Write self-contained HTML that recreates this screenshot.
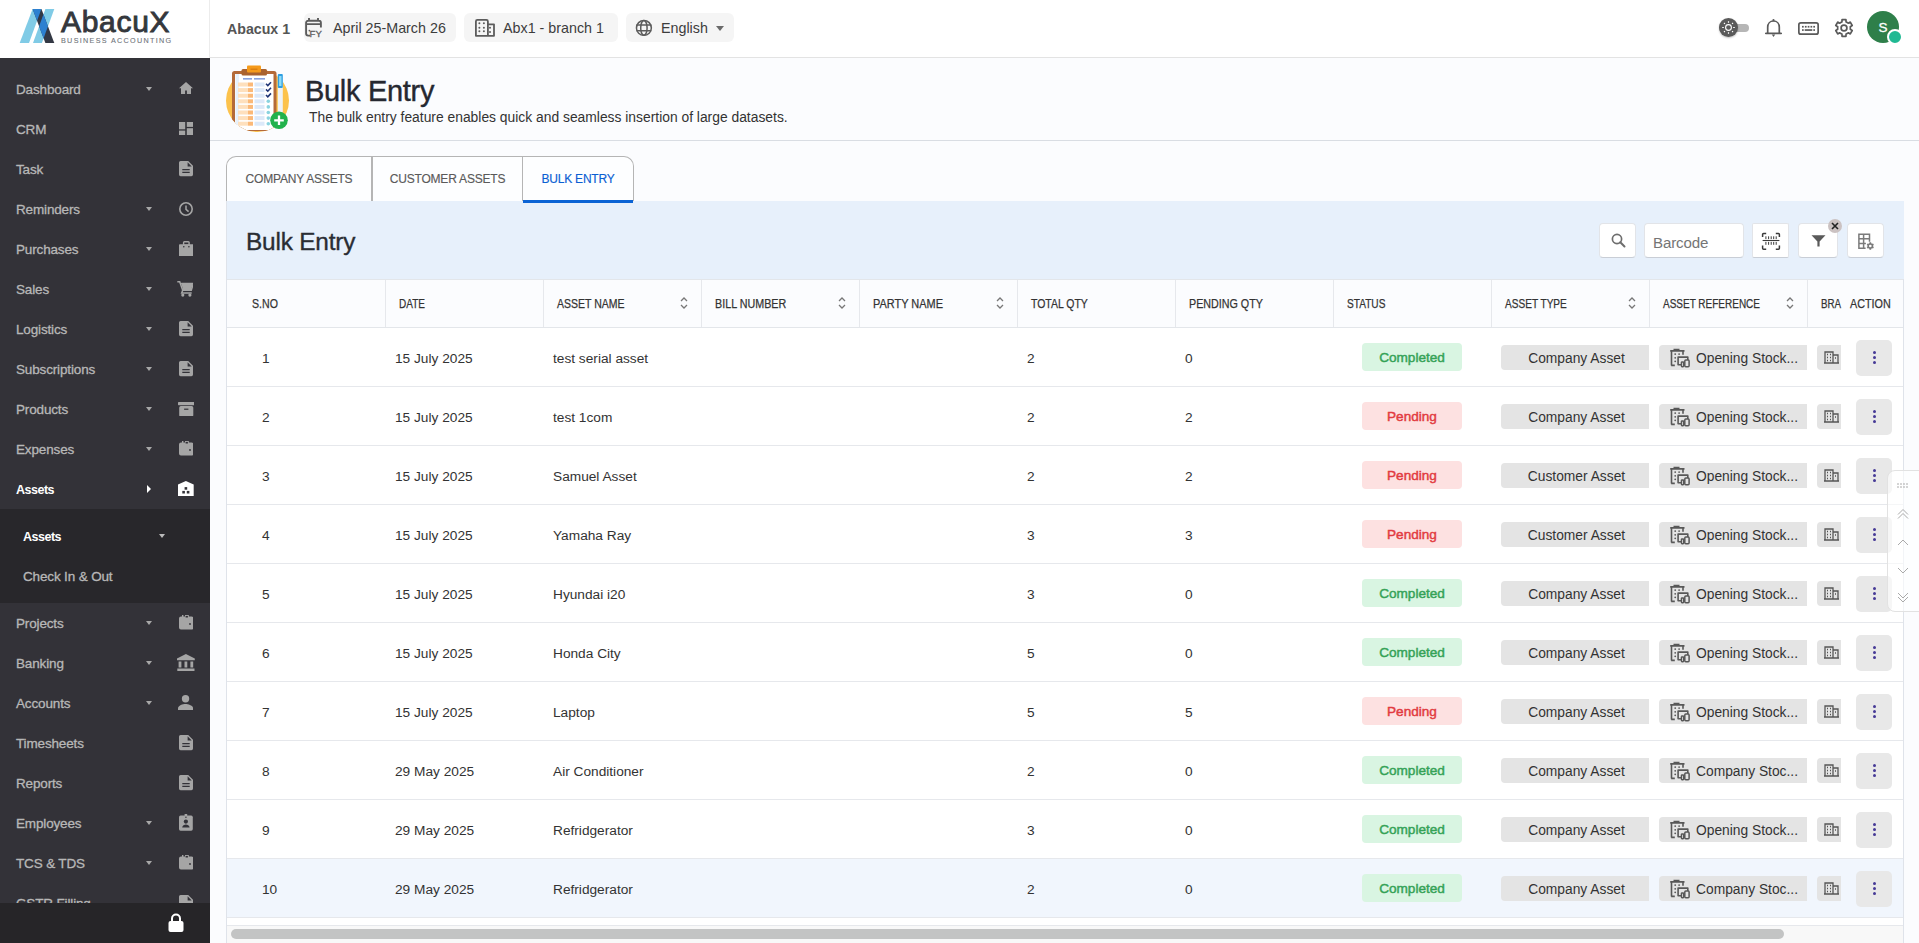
<!DOCTYPE html><html><head><meta charset="utf-8"><style>
*{box-sizing:border-box;margin:0;padding:0}
html,body{width:1919px;height:943px;overflow:hidden;background:#fbfcfe;font-family:"Liberation Sans",sans-serif;color:#333}
.abs{position:absolute}
#side{position:absolute;left:0;top:0;width:210px;height:943px;background:#333238;overflow:hidden}
#logo{position:absolute;left:0;top:0;width:210px;height:58px;background:#fff;border-right:1px solid #ececec}
.mi{position:absolute;left:0;width:210px;height:40px;color:#b9b9b9;font-size:13.5px;line-height:41.5px;letter-spacing:-0.15px;-webkit-text-stroke:0.3px #b6b6b6}
.mi .t{position:absolute;left:16px;top:0;white-space:nowrap}
.mi.act{color:#fff;font-weight:bold;-webkit-text-stroke:0;letter-spacing:-0.5px;font-size:12.5px;line-height:43px}
.car{position:absolute;left:146px;top:18px;width:0;height:0;border-left:3.5px solid transparent;border-right:3.5px solid transparent;border-top:4px solid #a8a8a8}
.carr{position:absolute;left:147px;top:16px;width:0;height:0;border-top:4px solid transparent;border-bottom:4px solid transparent;border-left:4px solid #fff}


#sub{position:absolute;left:0;top:509px;width:210px;height:94px;background:#28272b}
#lock{position:absolute;left:0;top:903px;width:210px;height:40px;background:#262528}
#hdr{position:absolute;left:210px;top:0;width:1709px;height:58px;background:#fff;border-bottom:1px solid #e3e3e3}
.pill{position:absolute;top:13px;height:29px;background:#f5f5f5;border-radius:6px;color:#3d3d3d;font-size:14.3px;line-height:31px;white-space:nowrap}
#ph{position:absolute;left:210px;top:58px;width:1709px;height:83px;border-bottom:1px solid #d9dde3}
.tab{position:absolute;top:156px;height:45px;border:1px solid #b5b5b5;border-bottom:none;background:#fdfeff;color:#5a5a5a;font-size:12px;line-height:45px;text-align:center;white-space:nowrap;letter-spacing:-0.2px;-webkit-text-stroke:0.15px #5a5a5a}
#card{position:absolute;left:226px;top:201px;width:1678px;height:742px;background:#fff;border-left:1px solid #dfe3ea;border-right:1px solid #dfe3ea}
#ch{position:absolute;left:0;top:0;width:1677px;height:78px;background:#e7f0fb}
.btn{position:absolute;top:22px;height:35px;background:#fff;border-radius:4px;border:1px solid #e2e4e8;border-bottom-color:#c9ced6}
.th{position:absolute;top:78px;height:49px;background:#fbfcfe;border-top:1px solid #e3e6ea;border-bottom:1px solid #e3e6ea}
.thc{position:absolute;top:0;height:47px;border-right:1px solid #e6e8ec;font-size:12.5px;-webkit-text-stroke:0.25px #333;color:#333;line-height:48px;white-space:nowrap}
.srt{position:absolute;top:16px;width:8px;height:14px}
.row{position:absolute;left:0;width:1676px;height:59px;border-bottom:1px solid #e6e8ec;font-size:13.7px;color:#333}
.row .c{position:absolute;top:1.5px;line-height:58px;white-space:nowrap}
.badge{position:absolute;left:1135px;top:15px;width:100px;height:28px;border-radius:4px;font-size:13.6px;text-align:center;line-height:29px}
.ok{background:#d9f5e2;color:#35a257;-webkit-text-stroke:0.45px #35a257}
.pen{background:#fde1e1;color:#e23a3f;-webkit-text-stroke:0.45px #e23a3f}
.chip{position:absolute;top:17px;height:25px;background:#e4e4e4;font-size:13.8px;line-height:27px;white-space:nowrap;color:#333}
.act3{position:absolute;left:1629px;top:12px;width:36px;height:36px;background:#e8e8e8;border-radius:5px}
.act3 i{position:absolute;left:16.8px;width:3.2px;height:3.2px;border-radius:50%;background:#463a96}
</style></head><body>
<div id="side"><div id="logo">
<svg class="abs" style="left:19px;top:8px" width="37" height="36" viewBox="0 0 37 36">
<defs><clipPath id="cpC"><polygon points="13.6,0.9 22.4,0.9 35.3,35 26.4,35"/></clipPath></defs>
<polygon points="0.7,35 10,35 22.4,0.9 13.6,0.9" fill="#80cbe6"/>
<polygon points="26.4,0.9 35.3,0.9 22.9,35 14,35" fill="#80cbe6"/>
<polygon points="13.6,0.9 22.4,0.9 35.3,35 26.4,35" fill="#333844"/>
<g clip-path="url(#cpC)"><polygon points="0.7,35 10,35 22.4,0.9 13.6,0.9" fill="#2c80d0"/><polygon points="26.4,0.9 35.3,0.9 22.9,35 14,35" fill="#2c80d0"/></g>
</svg>
<div class="abs" style="left:61px;top:6px;font-size:30px;color:#34373c;letter-spacing:0.7px;line-height:32px;-webkit-text-stroke:0.9px #34373c">AbacuX</div>
<div class="abs" style="left:61px;top:36.5px;font-size:7.2px;color:#6f747a;letter-spacing:1.33px;line-height:7px;white-space:nowrap;-webkit-text-stroke:0.1px #6f747a">BUSINESS ACCOUNTING</div>

</div>
<div id="sub"></div>
<div class="mi" style="top:69px"><span class="t">Dashboard</span><i class="car"></i><svg class="abs" style="left:179px;top:13.00px" width="14" height="12" viewBox="0 0 14 12"><path d="M7 0L0 6.3h2V12h4.1V8.6h1.8V12H12V6.3h2z" fill="#a5a5a5"/></svg></div>
<div class="mi" style="top:109px"><span class="t">CRM</span><svg class="abs" style="left:179px;top:12.70px" width="14" height="13.5" viewBox="0 0 14 13.5"><g fill="#a5a5a5"><rect x="0" y="0" width="6.2" height="7.3"/><rect x="0" y="8.6" width="6.2" height="4.9"/><rect x="7.8" y="0" width="6.2" height="4.9"/><rect x="7.8" y="6.2" width="6.2" height="7.3"/></g></svg></div>
<div class="mi" style="top:149px"><span class="t">Task</span><svg class="abs" style="left:179px;top:12.40px" width="14" height="15.2" viewBox="0 0 14 15.2"><path d="M1.6 0H9.2L14 4.8v8.8a1.6 1.6 0 0 1-1.6 1.6H1.6A1.6 1.6 0 0 1 0 13.6V1.6A1.6 1.6 0 0 1 1.6 0z" fill="#a5a5a5"/><path d="M8.6 1.3v4.1h4.1z" fill="#333238"/><path d="M3.3 8.6h7.4M3.3 11.4h7.4" stroke="#333238" stroke-width="1.3"/></svg></div>
<div class="mi" style="top:189px"><span class="t">Reminders</span><i class="car"></i><svg class="abs" style="left:179px;top:12.70px" width="14" height="14" viewBox="0 0 14 14"><circle cx="7" cy="7" r="6.2" fill="none" stroke="#a5a5a5" stroke-width="1.6"/><path d="M7 3.4v3.9l2.6 2.3" fill="none" stroke="#a5a5a5" stroke-width="1.5"/></svg></div>
<div class="mi" style="top:229px"><span class="t">Purchases</span><i class="car"></i><svg class="abs" style="left:178.6px;top:11.60px" width="14.7" height="15.4" viewBox="0 0 14.7 15.4"><rect x="4.6" y="0.7" width="5.5" height="3.6" rx="0.8" fill="none" stroke="#a5a5a5" stroke-width="1.4"/><rect x="0" y="3.2" width="14.7" height="12.2" rx="0.8" fill="#a5a5a5"/><circle cx="4.8" cy="5.8" r="0.8" fill="#333238"/><circle cx="9.9" cy="5.8" r="0.8" fill="#333238"/></svg></div>
<div class="mi" style="top:269px"><span class="t">Sales</span><i class="car"></i><svg class="abs" style="left:176.9px;top:11.90px" width="16.4" height="15.7" viewBox="0 0 16.4 15.7"><path d="M0.3 0.8h2.4l3 8.4h8.6l2-6.6H4.2" fill="none" stroke="#a5a5a5" stroke-width="1.5"/><path d="M4.3 2.6h11.7l-2 6.6H6.2z" fill="#a5a5a5"/><path d="M5.7 9.4l-1 2.6h10" fill="none" stroke="#a5a5a5" stroke-width="1.5"/><circle cx="5.8" cy="14.1" r="1.6" fill="#a5a5a5"/><circle cx="12.9" cy="14.1" r="1.6" fill="#a5a5a5"/></svg></div>
<div class="mi" style="top:309px"><span class="t">Logistics</span><i class="car"></i><svg class="abs" style="left:179px;top:12.40px" width="14" height="15.2" viewBox="0 0 14 15.2"><path d="M1.6 0H9.2L14 4.8v8.8a1.6 1.6 0 0 1-1.6 1.6H1.6A1.6 1.6 0 0 1 0 13.6V1.6A1.6 1.6 0 0 1 1.6 0z" fill="#a5a5a5"/><path d="M8.6 1.3v4.1h4.1z" fill="#333238"/><path d="M3.3 8.6h7.4M3.3 11.4h7.4" stroke="#333238" stroke-width="1.3"/></svg></div>
<div class="mi" style="top:349px"><span class="t">Subscriptions</span><i class="car"></i><svg class="abs" style="left:179px;top:12.40px" width="14" height="15.2" viewBox="0 0 14 15.2"><path d="M1.6 0H9.2L14 4.8v8.8a1.6 1.6 0 0 1-1.6 1.6H1.6A1.6 1.6 0 0 1 0 13.6V1.6A1.6 1.6 0 0 1 1.6 0z" fill="#a5a5a5"/><path d="M8.6 1.3v4.1h4.1z" fill="#333238"/><path d="M3.3 8.6h7.4M3.3 11.4h7.4" stroke="#333238" stroke-width="1.3"/></svg></div>
<div class="mi" style="top:389px"><span class="t">Products</span><i class="car"></i><svg class="abs" style="left:177.8px;top:12.50px" width="16.5" height="14.5" viewBox="0 0 16.5 14.5"><rect x="0" y="0" width="16.5" height="3.2" rx="0.6" fill="#a5a5a5"/><rect x="1.2" y="4.1" width="14.1" height="10.4" rx="1.6" fill="#a5a5a5"/><rect x="6.1" y="6.6" width="4.3" height="1.2" fill="#333238"/></svg></div>
<div class="mi" style="top:429px"><span class="t">Expenses</span><i class="car"></i><svg class="abs" style="left:178.9px;top:12.30px" width="14.5" height="14.5" viewBox="0 0 14.5 14.5"><path d="M2 1.6h1V0h1.4v1.6h1.6V0h3.8v1.6H12.5a2 2 0 0 1 2 2v8.9a2 2 0 0 1-2 2H2a2 2 0 0 1-2-2V3.6a2 2 0 0 1 2-2z" fill="#a5a5a5"/><rect x="6.6" y="0.9" width="2.3" height="1.6" fill="#333238"/><circle cx="11" cy="9" r="0.9" fill="#333238"/></svg></div>
<div class="mi act" style="top:469px"><span class="t">Assets</span><i class="carr"></i><svg class="abs" style="left:178.1px;top:12.00px" width="15.7" height="15" viewBox="0 0 15.7 15"><path d="M7.85 0L15.7 3.6V15H0V3.6z" fill="#fff"/><g fill="#333238"><rect x="6.6" y="6.1" width="2.6" height="2.6"/><rect x="4.3" y="9.9" width="2.6" height="2.6"/><rect x="8.8" y="9.9" width="2.6" height="2.6"/></g></svg></div>
<div class="mi" style="top:603px"><span class="t">Projects</span><i class="car"></i><svg class="abs" style="left:178.9px;top:12.30px" width="14.5" height="14.5" viewBox="0 0 14.5 14.5"><path d="M2 1.6h1V0h1.4v1.6h1.6V0h3.8v1.6H12.5a2 2 0 0 1 2 2v8.9a2 2 0 0 1-2 2H2a2 2 0 0 1-2-2V3.6a2 2 0 0 1 2-2z" fill="#a5a5a5"/><rect x="6.6" y="0.9" width="2.3" height="1.6" fill="#333238"/><circle cx="11" cy="9" r="0.9" fill="#333238"/></svg></div>
<div class="mi" style="top:643px"><span class="t">Banking</span><i class="car"></i><svg class="abs" style="left:177.3px;top:10.60px" width="17.8" height="17.4" viewBox="0 0 17.8 17.4"><path d="M8.9 0L0 4.4v1.8h17.8V4.4z M1.6 7.6h2.8v6h-2.8z M7.5 7.6h2.8v6H7.5z M13.4 7.6h2.8v6h-2.8z M0.3 14.6h17.2v2.8H0.3z" fill="#a5a5a5"/></svg></div>
<div class="mi" style="top:683px"><span class="t">Accounts</span><i class="car"></i><svg class="abs" style="left:178.4px;top:11.90px" width="15.1" height="15.2" viewBox="0 0 15.1 15.2"><circle cx="7.55" cy="3.7" r="3.7" fill="#a5a5a5"/><path d="M0 15.2v-2c0-2.8 4.9-4.3 7.55-4.3s7.55 1.5 7.55 4.3v2z" fill="#a5a5a5"/></svg></div>
<div class="mi" style="top:723px"><span class="t">Timesheets</span><svg class="abs" style="left:179px;top:12.40px" width="14" height="15.2" viewBox="0 0 14 15.2"><path d="M1.6 0H9.2L14 4.8v8.8a1.6 1.6 0 0 1-1.6 1.6H1.6A1.6 1.6 0 0 1 0 13.6V1.6A1.6 1.6 0 0 1 1.6 0z" fill="#a5a5a5"/><path d="M8.6 1.3v4.1h4.1z" fill="#333238"/><path d="M3.3 8.6h7.4M3.3 11.4h7.4" stroke="#333238" stroke-width="1.3"/></svg></div>
<div class="mi" style="top:763px"><span class="t">Reports</span><svg class="abs" style="left:179px;top:12.40px" width="14" height="15.2" viewBox="0 0 14 15.2"><path d="M1.6 0H9.2L14 4.8v8.8a1.6 1.6 0 0 1-1.6 1.6H1.6A1.6 1.6 0 0 1 0 13.6V1.6A1.6 1.6 0 0 1 1.6 0z" fill="#a5a5a5"/><path d="M8.6 1.3v4.1h4.1z" fill="#333238"/><path d="M3.3 8.6h7.4M3.3 11.4h7.4" stroke="#333238" stroke-width="1.3"/></svg></div>
<div class="mi" style="top:803px"><span class="t">Employees</span><i class="car"></i><svg class="abs" style="left:179.2px;top:11.20px" width="13.8" height="16.7" viewBox="0 0 13.8 16.7"><rect x="0" y="1.6" width="13.8" height="15.1" rx="1.6" fill="#a5a5a5"/><rect x="5.6" y="0" width="2.6" height="2.6" fill="#a5a5a5"/><rect x="6.1" y="2.7" width="1.6" height="1" fill="#333238"/><circle cx="6.9" cy="7.6" r="2.1" fill="#333238"/><path d="M3.2 13.6c0-2.1 2.3-3 3.7-3s3.7.9 3.7 3z" fill="#333238"/></svg></div>
<div class="mi" style="top:843px"><span class="t">TCS &amp; TDS</span><i class="car"></i><svg class="abs" style="left:178.9px;top:12.30px" width="14.5" height="14.5" viewBox="0 0 14.5 14.5"><path d="M2 1.6h1V0h1.4v1.6h1.6V0h3.8v1.6H12.5a2 2 0 0 1 2 2v8.9a2 2 0 0 1-2 2H2a2 2 0 0 1-2-2V3.6a2 2 0 0 1 2-2z" fill="#a5a5a5"/><rect x="6.6" y="0.9" width="2.3" height="1.6" fill="#333238"/><circle cx="11" cy="9" r="0.9" fill="#333238"/></svg></div>
<div class="mi" style="top:883px"><span class="t">GSTR Filling</span><svg class="abs" style="left:179px;top:12.40px" width="14" height="15.2" viewBox="0 0 14 15.2"><path d="M1.6 0H9.2L14 4.8v8.8a1.6 1.6 0 0 1-1.6 1.6H1.6A1.6 1.6 0 0 1 0 13.6V1.6A1.6 1.6 0 0 1 1.6 0z" fill="#a5a5a5"/><path d="M8.6 1.3v4.1h4.1z" fill="#333238"/><path d="M3.3 8.6h7.4M3.3 11.4h7.4" stroke="#333238" stroke-width="1.3"/></svg></div>
<div class="mi act" style="top:516px"><span class="t" style="left:23px">Assets</span><i class="car" style="left:159px;border-top-color:#bbb"></i></div>
<div class="mi" style="top:556px"><span class="t" style="left:23px">Check In &amp; Out</span></div>
<div id="lock"><svg class="abs" style="left:167px;top:10px" width="18" height="20" viewBox="0 0 18 20"><path d="M4 8V5.5a5 5 0 0 1 10 0V8h-2V5.5a3 3 0 0 0-6 0V8z" fill="#fff"/><rect x="1.5" y="8" width="15" height="11" rx="2" fill="#fff"/></svg></div>
</div>
<div id="hdr">
<div class="abs" style="left:17px;top:1px;line-height:57px;font-size:14.2px;font-weight:bold;color:#555">Abacux 1</div>
<div class="pill" style="left:94px;width:152px">
<svg class="abs" style="left:0;top:4px" width="21" height="21" viewBox="0 0 21 21"><path d="M6 18.6H4.1a2 2 0 0 1-2-2V5.8a2 2 0 0 1 2-2h10.8a2 2 0 0 1 2 2v4.7M2.1 7.1h14.8M5 1v3M14 1v3" fill="none" stroke="#5c5c5c" stroke-width="1.9"/><circle cx="5.4" cy="13.6" r="0.9" fill="#5c5c5c"/><text x="5.6" y="19.7" font-family="Liberation Sans" font-size="9.6" fill="#5c5c5c" stroke="#5c5c5c" stroke-width="0.3">FY</text></svg>
<span class="abs" style="left:29px;top:0">April 25-March 26</span></div>
<div class="pill" style="left:254px;width:154px">
<svg class="abs" style="left:10px;top:5px" width="22" height="20" viewBox="0 0 22 20"><path d="M13.9 17.8H1.9V3.4a1.5 1.5 0 0 1 1.5-1.5h9a1.5 1.5 0 0 1 1.5 1.5zM13.9 6.3H20v11.5h-6.1" fill="none" stroke="#5c5c5c" stroke-width="1.8" stroke-linejoin="round"/><g fill="#5c5c5c"><circle cx="5.4" cy="5.3" r="1"/><circle cx="9.9" cy="5.3" r="1"/><circle cx="5.4" cy="9.7" r="1"/><circle cx="9.9" cy="9.7" r="1"/><circle cx="5.4" cy="13.3" r="1"/><circle cx="9.9" cy="13.3" r="1"/><circle cx="16" cy="9.7" r="1"/><circle cx="16" cy="13.9" r="1"/></g></svg>
<span class="abs" style="left:39px;top:0">Abx1 - branch 1</span></div>
<div class="pill" style="left:416px;width:108px">
<svg class="abs" style="left:9px;top:6px" width="18" height="18" viewBox="0 0 18 18" fill="none" stroke="#5c5c5c" stroke-width="1.5"><circle cx="8.9" cy="8.9" r="7.45"/><ellipse cx="8.9" cy="8.9" rx="3.2" ry="7.45"/><path d="M1.6 6.1h14.6M1.6 11.7h14.6"/></svg>
<span class="abs" style="left:35px;top:0">English</span>
<i class="abs" style="left:90px;top:13px;width:0;height:0;border-left:4px solid transparent;border-right:4px solid transparent;border-top:5px solid #6a6a6a"></i></div>
<div class="abs" style="left:1509px;top:24px;width:30px;height:8px;border-radius:4px;background:#b6b6b6"></div>
<div class="abs" style="left:1509px;top:18px;width:19px;height:19px;border-radius:50%;background:#5a5a5a;box-shadow:0 1px 2px rgba(0,0,0,.25)"></div>
<svg class="abs" style="left:1511px;top:20px" width="15" height="15" viewBox="0 0 15 15" fill="none" stroke="#fff" stroke-width="1.1"><circle cx="7.5" cy="7.5" r="2.9"/><path d="M7.5 1.2v1.6M7.5 12.2v1.6M1.2 7.5h1.6M12.2 7.5h1.6M3 3l.9.9M11.1 11.1l.9.9M3 12l.9-.9M11.1 3.9l.9-.9" stroke-width="1.2"/></svg>
<svg class="abs" style="left:1555px;top:18px" width="17" height="20" viewBox="0 0 17 20"><path d="M2.7 15V9.2C2.7 5.6 5.2 3 8.5 3s5.8 2.6 5.8 6.2V15" fill="none" stroke="#5a5a5a" stroke-width="1.7"/><path d="M0.8 15.4h15.4" stroke="#5a5a5a" stroke-width="1.7" stroke-linecap="round"/><circle cx="8.5" cy="2.2" r="1.1" fill="#5a5a5a"/><path d="M6.8 16.5h3.4L8.5 19z" fill="#5a5a5a"/></svg>
<svg class="abs" style="left:1588px;top:22px" width="21" height="13" viewBox="0 0 21 13"><rect x="0.85" y="0.85" width="19.3" height="11.3" rx="2" fill="none" stroke="#5a5a5a" stroke-width="1.7"/><g fill="#5a5a5a"><rect x="4" y="3.9" width="1.7" height="1.7"/><rect x="6.9" y="3.9" width="1.7" height="1.7"/><rect x="9.7" y="3.9" width="1.7" height="1.7"/><rect x="12.5" y="3.9" width="1.7" height="1.7"/><rect x="15.3" y="3.9" width="1.7" height="1.7"/><rect x="4" y="7.2" width="1.7" height="1.7"/><rect x="6.7" y="7.2" width="7.6" height="1.7"/><rect x="15.3" y="7.2" width="1.7" height="1.7"/></g></svg>
<svg class="abs" style="left:1624px;top:18px" width="20" height="20" viewBox="0 0 20 20" fill="none" stroke="#5a5a5a" stroke-width="1.7" stroke-linejoin="round"><path d="M7.92 3.95 L8.07 1.62 L11.93 1.62 L12.08 3.95 A6.4 6.4 0 0 1 14.20 5.17 L16.29 4.13 L18.22 7.49 L16.28 8.78 A6.4 6.4 0 0 1 16.28 11.22 L18.22 12.51 L16.29 15.87 L14.20 14.83 A6.4 6.4 0 0 1 12.08 16.05 L11.93 18.38 L8.07 18.38 L7.92 16.05 A6.4 6.4 0 0 1 5.80 14.83 L3.71 15.87 L1.78 12.51 L3.72 11.22 A6.4 6.4 0 0 1 3.72 8.78 L1.78 7.49 L3.71 4.13 L5.80 5.17 A6.4 6.4 0 0 1 7.92 3.95Z"/><circle cx="10" cy="10" r="2.9"/></svg>
<div class="abs" style="left:1657px;top:11px;width:32px;height:32px;border-radius:50%;background:#2e7f4a;color:#fff;font-size:13.5px;text-align:center;line-height:33px;-webkit-text-stroke:0.3px #fff">S</div>
<div class="abs" style="left:1677px;top:29px;width:16px;height:16px;border-radius:50%;background:#20b993;border:2px solid #fff"></div>

</div>
<div id="ph"></div>
<svg class="abs" style="left:226px;top:64px" width="66" height="70" viewBox="0 0 66 70">
<defs><clipPath id="cb"><circle cx="31.5" cy="36.5" r="31.6"/><rect x="0" y="0" width="66" height="40"/></clipPath></defs>
<circle cx="31.5" cy="36.5" r="31.5" fill="#fcc24c"/>
<g clip-path="url(#cb)">
<rect x="6" y="7" width="44.5" height="60" rx="2.5" fill="#b46a39"/>
<rect x="9" y="10" width="38.5" height="56" fill="#fff"/>
<rect x="9.5" y="10" width="3.5" height="56" fill="#e6f1fc"/>
<rect x="12" y="18.5" width="10" height="4" fill="#fee0bd"/><rect x="22" y="18.5" width="5" height="4" fill="#fbb978"/><rect x="28.5" y="18.5" width="10" height="4" fill="#dce9f9"/><rect x="12" y="24.1" width="10" height="4" fill="#fee0bd"/><rect x="22" y="24.1" width="5" height="4" fill="#fbb978"/><rect x="28.5" y="24.1" width="10" height="4" fill="#dce9f9"/><rect x="12" y="29.7" width="10" height="4" fill="#fee0bd"/><rect x="22" y="29.7" width="5" height="4" fill="#fbb978"/><rect x="28.5" y="29.7" width="10" height="4" fill="#dce9f9"/><rect x="12" y="35.3" width="10" height="4" fill="#fee0bd"/><rect x="22" y="35.3" width="5" height="4" fill="#fbb978"/><rect x="28.5" y="35.3" width="10" height="4" fill="#dce9f9"/><rect x="12" y="40.9" width="10" height="4" fill="#fee0bd"/><rect x="22" y="40.9" width="5" height="4" fill="#fbb978"/><rect x="28.5" y="40.9" width="10" height="4" fill="#dce9f9"/><rect x="12" y="46.5" width="10" height="4" fill="#fee0bd"/><rect x="22" y="46.5" width="5" height="4" fill="#fbb978"/><rect x="28.5" y="46.5" width="10" height="4" fill="#dce9f9"/><rect x="12" y="52.1" width="10" height="4" fill="#fee0bd"/><rect x="22" y="52.1" width="5" height="4" fill="#fbb978"/><rect x="28.5" y="52.1" width="10" height="4" fill="#dce9f9"/><rect x="12" y="57.7" width="10" height="4" fill="#fee0bd"/><rect x="22" y="57.7" width="5" height="4" fill="#fbb978"/><rect x="28.5" y="57.7" width="10" height="4" fill="#dce9f9"/>
</g>
<rect x="15.5" y="5" width="25.5" height="6.6" rx="1.5" fill="#a9622f"/>
<rect x="21" y="1.6" width="14" height="7" rx="1" fill="#f59a1b"/><rect x="24.5" y="4.6" width="7" height="1.2" fill="#d77a10"/>
<rect x="17" y="14.2" width="9" height="1.3" fill="#6c8ad6"/><rect x="28" y="14.2" width="11" height="1.3" fill="#6c8ad6"/>
<path d="M40 19.8l1.8 1.8 3.2-3.4" stroke="#1f3576" stroke-width="1.6" fill="none"/><path d="M40 25.4l1.8 1.8 3.2-3.4" stroke="#1f3576" stroke-width="1.6" fill="none"/><path d="M40 31.0l1.8 1.8 3.2-3.4" stroke="#1f3576" stroke-width="1.6" fill="none"/><circle cx="42.3" cy="37.3" r="1.8" fill="#8ad3df"/><circle cx="42.3" cy="42.9" r="1.8" fill="#8ad3df"/><circle cx="42.3" cy="48.5" r="1.8" fill="#8ad3df"/><circle cx="42.3" cy="54.1" r="1.8" fill="#8ad3df"/><circle cx="42.3" cy="59.7" r="1.8" fill="#8ad3df"/><rect x="51.8" y="10" width="5" height="39" rx="1" fill="#eef2f6"/>
<rect x="51.8" y="10" width="5" height="14" rx="1" fill="#2e9fe2"/><rect x="53.1" y="12" width="2.4" height="10" fill="#8fdcf5"/>
<circle cx="53" cy="56.3" r="8.8" fill="#22b24c"/>
<path d="M53 51.5v9.6M48.2 56.3h9.6" stroke="#fff" stroke-width="2.3"/>
</svg>
<div class="abs" style="left:305px;top:73px;font-size:29px;line-height:36px;color:#252830;white-space:nowrap;letter-spacing:-0.3px;-webkit-text-stroke:0.4px #252830">Bulk Entry</div>
<div class="abs" style="left:309px;top:109px;font-size:13.85px;line-height:16px;color:#333;white-space:nowrap">The bulk entry feature enables quick and seamless insertion of large datasets.</div>
<div class="tab" style="left:226px;width:146px;border-top-left-radius:10px">COMPANY ASSETS</div>
<div class="tab" style="left:372px;width:150px;border-right:none">CUSTOMER ASSETS</div>
<div class="tab" style="left:522px;width:112px;border-top-right-radius:10px;color:#0b5fd3;-webkit-text-stroke:0.15px #0b5fd3">BULK ENTRY</div>
<div id="card"><div id="ch">
<div class="abs" style="left:19px;top:22.5px;font-size:24.4px;line-height:36px;color:#2a2d33;white-space:nowrap;letter-spacing:-0.2px;-webkit-text-stroke:0.35px #2a2d33">Bulk Entry</div>
<div class="btn" style="left:1372px;width:37px"><svg class="abs" style="left:11px;top:9px" width="15" height="15" viewBox="0 0 15 15" fill="none" stroke="#6e6e6e" stroke-width="1.7"><circle cx="6" cy="6" r="4.6"/><path d="M9.3 9.3l4.2 4.2" stroke-linecap="round" stroke-width="2"/></svg></div>
<div class="btn" style="left:1417px;width:100px"><span class="abs" style="left:8px;top:0.5px;line-height:35px;font-size:15.1px;letter-spacing:-0.15px;color:#757575">Barcode</span></div>
<div class="btn" style="left:1525px;width:37px;border-radius:2px"><svg class="abs" style="left:8px;top:8px" width="20" height="19" viewBox="0 0 20 19"><path d="M1.6 5V2.4a1 1 0 0 1 1-1h2.6M14.8 1.4h2.6a1 1 0 0 1 1 1V5M18.4 13.6v2.6a1 1 0 0 1-1 1h-2.6M5.2 17.2H2.6a1 1 0 0 1-1-1v-2.6" fill="none" stroke="#3a3a3a" stroke-width="1.5"/><path d="M1.6 8.5h16.8" stroke="#3a3a3a" stroke-width="1.1"/><path d="M4.9 4.3v2.8M7.6 4.3v2.8M10.2 4.3v2.8M12.7 4.3v2.8M15.2 4.3v2.8M4.9 9.9v2.9M7.6 9.9v2.9M10.2 9.9v2.9M12.7 9.9v2.9M15.2 9.9v2.9" stroke="#3a3a3a" stroke-width="1"/></svg></div>
<div class="btn" style="left:1571px;width:40px"><svg class="abs" style="left:11.5px;top:10.8px" width="15" height="12" viewBox="0 0 15 12"><path d="M0.5 0.2h14L8.6 6.6V11.6H6.4V6.6z" fill="#5a5a5a"/></svg></div>
<div class="abs" style="left:1601px;top:18px;width:14px;height:14px;border-radius:50%;background:#cbc2c2"><svg class="abs" style="left:3px;top:3px" width="8" height="8" viewBox="0 0 8 8" stroke="#222" stroke-width="1.6"><path d="M1 1l6 6M7 1L1 7"/></svg></div>
<div class="btn" style="left:1620px;width:37px"><svg class="abs" style="left:9px;top:9px" width="18" height="17" viewBox="0 0 18 17"><path d="M8.6 15.3H1.9V1.2h10.6v7.6M1.9 5.8h10.6M1.9 10.5h7M6.6 1.2v14.1" fill="none" stroke="#7a7a7a" stroke-width="1.5"/><g transform="translate(8.9 8.6) scale(0.44)"><path d="M7.92 3.95 L8.07 1.62 L11.93 1.62 L12.08 3.95 A6.4 6.4 0 0 1 14.20 5.17 L16.29 4.13 L18.22 7.49 L16.28 8.78 A6.4 6.4 0 0 1 16.28 11.22 L18.22 12.51 L16.29 15.87 L14.20 14.83 A6.4 6.4 0 0 1 12.08 16.05 L11.93 18.38 L8.07 18.38 L7.92 16.05 A6.4 6.4 0 0 1 5.80 14.83 L3.71 15.87 L1.78 12.51 L3.72 11.22 A6.4 6.4 0 0 1 3.72 8.78 L1.78 7.49 L3.71 4.13 L5.80 5.17 A6.4 6.4 0 0 1 7.92 3.95Z" fill="#7a7a7a"/><circle cx="10" cy="10" r="3" fill="#fff"/></g></svg></div>
</div>
<div class="th" style="left:0;width:1676px">
<div class="thc" style="left:0;width:159px"><span class="abs" style="left:24.65px;transform:scaleX(0.8479);transform-origin:0 0">S.NO</span></div>
<div class="thc" style="left:159px;width:158px"><span class="abs" style="left:13.15px;transform:scaleX(0.8001);transform-origin:0 0">DATE</span></div>
<div class="thc" style="left:317px;width:158px"><span class="abs" style="left:13.40px;transform:scaleX(0.8398);transform-origin:0 0">ASSET NAME</span><svg class="srt" style="left:136px" viewBox="0 0 8 14" fill="none" stroke="#777" stroke-width="1.3"><path d="M1 5l3-3 3 3M1 9l3 3 3-3"/></svg></div>
<div class="thc" style="left:475px;width:158px"><span class="abs" style="left:13.40px;transform:scaleX(0.8596);transform-origin:0 0">BILL NUMBER</span><svg class="srt" style="left:136px" viewBox="0 0 8 14" fill="none" stroke="#777" stroke-width="1.3"><path d="M1 5l3-3 3 3M1 9l3 3 3-3"/></svg></div>
<div class="thc" style="left:633px;width:158px"><span class="abs" style="left:12.90px;transform:scaleX(0.8757);transform-origin:0 0">PARTY NAME</span><svg class="srt" style="left:136px" viewBox="0 0 8 14" fill="none" stroke="#777" stroke-width="1.3"><path d="M1 5l3-3 3 3M1 9l3 3 3-3"/></svg></div>
<div class="thc" style="left:791px;width:158px"><span class="abs" style="left:13.40px;transform:scaleX(0.8370);transform-origin:0 0">TOTAL QTY</span></div>
<div class="thc" style="left:949px;width:158px"><span class="abs" style="left:12.90px;transform:scaleX(0.8582);transform-origin:0 0">PENDING QTY</span></div>
<div class="thc" style="left:1107px;width:158px"><span class="abs" style="left:12.90px;transform:scaleX(0.8097);transform-origin:0 0">STATUS</span></div>
<div class="thc" style="left:1265px;width:158px"><span class="abs" style="left:12.90px;transform:scaleX(0.8064);transform-origin:0 0">ASSET TYPE</span><svg class="srt" style="left:136px" viewBox="0 0 8 14" fill="none" stroke="#777" stroke-width="1.3"><path d="M1 5l3-3 3 3M1 9l3 3 3-3"/></svg></div>
<div class="thc" style="left:1423px;width:158px"><span class="abs" style="left:12.90px;transform:scaleX(0.7995);transform-origin:0 0">ASSET REFERENCE</span><svg class="srt" style="left:136px" viewBox="0 0 8 14" fill="none" stroke="#777" stroke-width="1.3"><path d="M1 5l3-3 3 3M1 9l3 3 3-3"/></svg></div>
<div class="thc" style="left:1581px;width:42px;border-right:none"><span class="abs" style="left:13.00px;transform:scaleX(0.7816);transform-origin:0 0">BRA</span></div>
<div class="thc" style="left:1623px;width:54px;border-right:none"><span class="abs" style="left:0.20px;transform:scaleX(0.8609);transform-origin:0 0">ACTION</span></div>
</div>
<div class="row" style="top:127px;">
<span class="c" style="left:35px">1</span><span class="c" style="left:168px">15 July 2025</span><span class="c" style="left:326px">test serial asset</span>
<span class="c" style="left:800px">2</span><span class="c" style="left:958px">0</span>
<div class="badge ok">Completed</div>
<div class="chip" style="left:1274px;width:148px;border-radius:4px 0 0 4px;text-align:center;text-indent:3px">Company Asset</div>
<div class="chip" style="left:1432px;width:148px;border-radius:4px 0 0 4px"><svg class="abs" style="left:10px;top:3px" width="22" height="21" viewBox="0 0 22 21"><g fill="none" stroke="#585858" stroke-width="1.6"><path d="M4.5 1.6H10.5M1.2 2.9H15.5M2.5 3v14.6M14 3v3.8M2.2 17.4H5.8M9.1 9.1h9.7v7.7H9.1z" stroke-linejoin="round"/></g><g fill="#585858"><circle cx="6.2" cy="6.1" r="0.9"/><circle cx="10.1" cy="6.1" r="0.9"/><circle cx="6.2" cy="9.8" r="0.9"/><circle cx="6.2" cy="13.3" r="0.9"/></g><rect x="15.8" y="12.1" width="4.3" height="6.6" rx="1" fill="#e4e4e4" stroke="#585858" stroke-width="1.5"/><rect x="12.4" y="14" width="2.2" height="4.7" rx="0.6" fill="#e4e4e4" stroke="#585858" stroke-width="1.4"/></svg><span class="abs" style="left:37px">Opening Stock...</span></div>
<div class="chip" style="left:1590px;width:24px;border-radius:4px 0 0 4px"><svg class="abs" style="left:7px;top:6px" width="15" height="13" viewBox="0 0 15 13" fill="none" stroke="#555" stroke-width="1.3"><path d="M1 12V1h8v11M9 4h5v8M0 12h15M3 3.5h1M6 3.5h1M3 6.5h1M6 6.5h1M3 9.5h1M6 9.5h1M11 7h1"/></svg></div>
<div class="act3"><i style="top:10.9px"></i><i style="top:15.9px"></i><i style="top:20.9px"></i></div>
</div>
<div class="row" style="top:186px;">
<span class="c" style="left:35px">2</span><span class="c" style="left:168px">15 July 2025</span><span class="c" style="left:326px">test 1com</span>
<span class="c" style="left:800px">2</span><span class="c" style="left:958px">2</span>
<div class="badge pen">Pending</div>
<div class="chip" style="left:1274px;width:148px;border-radius:4px 0 0 4px;text-align:center;text-indent:3px">Company Asset</div>
<div class="chip" style="left:1432px;width:148px;border-radius:4px 0 0 4px"><svg class="abs" style="left:10px;top:3px" width="22" height="21" viewBox="0 0 22 21"><g fill="none" stroke="#585858" stroke-width="1.6"><path d="M4.5 1.6H10.5M1.2 2.9H15.5M2.5 3v14.6M14 3v3.8M2.2 17.4H5.8M9.1 9.1h9.7v7.7H9.1z" stroke-linejoin="round"/></g><g fill="#585858"><circle cx="6.2" cy="6.1" r="0.9"/><circle cx="10.1" cy="6.1" r="0.9"/><circle cx="6.2" cy="9.8" r="0.9"/><circle cx="6.2" cy="13.3" r="0.9"/></g><rect x="15.8" y="12.1" width="4.3" height="6.6" rx="1" fill="#e4e4e4" stroke="#585858" stroke-width="1.5"/><rect x="12.4" y="14" width="2.2" height="4.7" rx="0.6" fill="#e4e4e4" stroke="#585858" stroke-width="1.4"/></svg><span class="abs" style="left:37px">Opening Stock...</span></div>
<div class="chip" style="left:1590px;width:24px;border-radius:4px 0 0 4px"><svg class="abs" style="left:7px;top:6px" width="15" height="13" viewBox="0 0 15 13" fill="none" stroke="#555" stroke-width="1.3"><path d="M1 12V1h8v11M9 4h5v8M0 12h15M3 3.5h1M6 3.5h1M3 6.5h1M6 6.5h1M3 9.5h1M6 9.5h1M11 7h1"/></svg></div>
<div class="act3"><i style="top:10.9px"></i><i style="top:15.9px"></i><i style="top:20.9px"></i></div>
</div>
<div class="row" style="top:245px;">
<span class="c" style="left:35px">3</span><span class="c" style="left:168px">15 July 2025</span><span class="c" style="left:326px">Samuel Asset</span>
<span class="c" style="left:800px">2</span><span class="c" style="left:958px">2</span>
<div class="badge pen">Pending</div>
<div class="chip" style="left:1274px;width:148px;border-radius:4px 0 0 4px;text-align:center;text-indent:3px">Customer Asset</div>
<div class="chip" style="left:1432px;width:148px;border-radius:4px 0 0 4px"><svg class="abs" style="left:10px;top:3px" width="22" height="21" viewBox="0 0 22 21"><g fill="none" stroke="#585858" stroke-width="1.6"><path d="M4.5 1.6H10.5M1.2 2.9H15.5M2.5 3v14.6M14 3v3.8M2.2 17.4H5.8M9.1 9.1h9.7v7.7H9.1z" stroke-linejoin="round"/></g><g fill="#585858"><circle cx="6.2" cy="6.1" r="0.9"/><circle cx="10.1" cy="6.1" r="0.9"/><circle cx="6.2" cy="9.8" r="0.9"/><circle cx="6.2" cy="13.3" r="0.9"/></g><rect x="15.8" y="12.1" width="4.3" height="6.6" rx="1" fill="#e4e4e4" stroke="#585858" stroke-width="1.5"/><rect x="12.4" y="14" width="2.2" height="4.7" rx="0.6" fill="#e4e4e4" stroke="#585858" stroke-width="1.4"/></svg><span class="abs" style="left:37px">Opening Stock...</span></div>
<div class="chip" style="left:1590px;width:24px;border-radius:4px 0 0 4px"><svg class="abs" style="left:7px;top:6px" width="15" height="13" viewBox="0 0 15 13" fill="none" stroke="#555" stroke-width="1.3"><path d="M1 12V1h8v11M9 4h5v8M0 12h15M3 3.5h1M6 3.5h1M3 6.5h1M6 6.5h1M3 9.5h1M6 9.5h1M11 7h1"/></svg></div>
<div class="act3"><i style="top:10.9px"></i><i style="top:15.9px"></i><i style="top:20.9px"></i></div>
</div>
<div class="row" style="top:304px;">
<span class="c" style="left:35px">4</span><span class="c" style="left:168px">15 July 2025</span><span class="c" style="left:326px">Yamaha Ray</span>
<span class="c" style="left:800px">3</span><span class="c" style="left:958px">3</span>
<div class="badge pen">Pending</div>
<div class="chip" style="left:1274px;width:148px;border-radius:4px 0 0 4px;text-align:center;text-indent:3px">Customer Asset</div>
<div class="chip" style="left:1432px;width:148px;border-radius:4px 0 0 4px"><svg class="abs" style="left:10px;top:3px" width="22" height="21" viewBox="0 0 22 21"><g fill="none" stroke="#585858" stroke-width="1.6"><path d="M4.5 1.6H10.5M1.2 2.9H15.5M2.5 3v14.6M14 3v3.8M2.2 17.4H5.8M9.1 9.1h9.7v7.7H9.1z" stroke-linejoin="round"/></g><g fill="#585858"><circle cx="6.2" cy="6.1" r="0.9"/><circle cx="10.1" cy="6.1" r="0.9"/><circle cx="6.2" cy="9.8" r="0.9"/><circle cx="6.2" cy="13.3" r="0.9"/></g><rect x="15.8" y="12.1" width="4.3" height="6.6" rx="1" fill="#e4e4e4" stroke="#585858" stroke-width="1.5"/><rect x="12.4" y="14" width="2.2" height="4.7" rx="0.6" fill="#e4e4e4" stroke="#585858" stroke-width="1.4"/></svg><span class="abs" style="left:37px">Opening Stock...</span></div>
<div class="chip" style="left:1590px;width:24px;border-radius:4px 0 0 4px"><svg class="abs" style="left:7px;top:6px" width="15" height="13" viewBox="0 0 15 13" fill="none" stroke="#555" stroke-width="1.3"><path d="M1 12V1h8v11M9 4h5v8M0 12h15M3 3.5h1M6 3.5h1M3 6.5h1M6 6.5h1M3 9.5h1M6 9.5h1M11 7h1"/></svg></div>
<div class="act3"><i style="top:10.9px"></i><i style="top:15.9px"></i><i style="top:20.9px"></i></div>
</div>
<div class="row" style="top:363px;">
<span class="c" style="left:35px">5</span><span class="c" style="left:168px">15 July 2025</span><span class="c" style="left:326px">Hyundai i20</span>
<span class="c" style="left:800px">3</span><span class="c" style="left:958px">0</span>
<div class="badge ok">Completed</div>
<div class="chip" style="left:1274px;width:148px;border-radius:4px 0 0 4px;text-align:center;text-indent:3px">Company Asset</div>
<div class="chip" style="left:1432px;width:148px;border-radius:4px 0 0 4px"><svg class="abs" style="left:10px;top:3px" width="22" height="21" viewBox="0 0 22 21"><g fill="none" stroke="#585858" stroke-width="1.6"><path d="M4.5 1.6H10.5M1.2 2.9H15.5M2.5 3v14.6M14 3v3.8M2.2 17.4H5.8M9.1 9.1h9.7v7.7H9.1z" stroke-linejoin="round"/></g><g fill="#585858"><circle cx="6.2" cy="6.1" r="0.9"/><circle cx="10.1" cy="6.1" r="0.9"/><circle cx="6.2" cy="9.8" r="0.9"/><circle cx="6.2" cy="13.3" r="0.9"/></g><rect x="15.8" y="12.1" width="4.3" height="6.6" rx="1" fill="#e4e4e4" stroke="#585858" stroke-width="1.5"/><rect x="12.4" y="14" width="2.2" height="4.7" rx="0.6" fill="#e4e4e4" stroke="#585858" stroke-width="1.4"/></svg><span class="abs" style="left:37px">Opening Stock...</span></div>
<div class="chip" style="left:1590px;width:24px;border-radius:4px 0 0 4px"><svg class="abs" style="left:7px;top:6px" width="15" height="13" viewBox="0 0 15 13" fill="none" stroke="#555" stroke-width="1.3"><path d="M1 12V1h8v11M9 4h5v8M0 12h15M3 3.5h1M6 3.5h1M3 6.5h1M6 6.5h1M3 9.5h1M6 9.5h1M11 7h1"/></svg></div>
<div class="act3"><i style="top:10.9px"></i><i style="top:15.9px"></i><i style="top:20.9px"></i></div>
</div>
<div class="row" style="top:422px;">
<span class="c" style="left:35px">6</span><span class="c" style="left:168px">15 July 2025</span><span class="c" style="left:326px">Honda City</span>
<span class="c" style="left:800px">5</span><span class="c" style="left:958px">0</span>
<div class="badge ok">Completed</div>
<div class="chip" style="left:1274px;width:148px;border-radius:4px 0 0 4px;text-align:center;text-indent:3px">Company Asset</div>
<div class="chip" style="left:1432px;width:148px;border-radius:4px 0 0 4px"><svg class="abs" style="left:10px;top:3px" width="22" height="21" viewBox="0 0 22 21"><g fill="none" stroke="#585858" stroke-width="1.6"><path d="M4.5 1.6H10.5M1.2 2.9H15.5M2.5 3v14.6M14 3v3.8M2.2 17.4H5.8M9.1 9.1h9.7v7.7H9.1z" stroke-linejoin="round"/></g><g fill="#585858"><circle cx="6.2" cy="6.1" r="0.9"/><circle cx="10.1" cy="6.1" r="0.9"/><circle cx="6.2" cy="9.8" r="0.9"/><circle cx="6.2" cy="13.3" r="0.9"/></g><rect x="15.8" y="12.1" width="4.3" height="6.6" rx="1" fill="#e4e4e4" stroke="#585858" stroke-width="1.5"/><rect x="12.4" y="14" width="2.2" height="4.7" rx="0.6" fill="#e4e4e4" stroke="#585858" stroke-width="1.4"/></svg><span class="abs" style="left:37px">Opening Stock...</span></div>
<div class="chip" style="left:1590px;width:24px;border-radius:4px 0 0 4px"><svg class="abs" style="left:7px;top:6px" width="15" height="13" viewBox="0 0 15 13" fill="none" stroke="#555" stroke-width="1.3"><path d="M1 12V1h8v11M9 4h5v8M0 12h15M3 3.5h1M6 3.5h1M3 6.5h1M6 6.5h1M3 9.5h1M6 9.5h1M11 7h1"/></svg></div>
<div class="act3"><i style="top:10.9px"></i><i style="top:15.9px"></i><i style="top:20.9px"></i></div>
</div>
<div class="row" style="top:481px;">
<span class="c" style="left:35px">7</span><span class="c" style="left:168px">15 July 2025</span><span class="c" style="left:326px">Laptop</span>
<span class="c" style="left:800px">5</span><span class="c" style="left:958px">5</span>
<div class="badge pen">Pending</div>
<div class="chip" style="left:1274px;width:148px;border-radius:4px 0 0 4px;text-align:center;text-indent:3px">Company Asset</div>
<div class="chip" style="left:1432px;width:148px;border-radius:4px 0 0 4px"><svg class="abs" style="left:10px;top:3px" width="22" height="21" viewBox="0 0 22 21"><g fill="none" stroke="#585858" stroke-width="1.6"><path d="M4.5 1.6H10.5M1.2 2.9H15.5M2.5 3v14.6M14 3v3.8M2.2 17.4H5.8M9.1 9.1h9.7v7.7H9.1z" stroke-linejoin="round"/></g><g fill="#585858"><circle cx="6.2" cy="6.1" r="0.9"/><circle cx="10.1" cy="6.1" r="0.9"/><circle cx="6.2" cy="9.8" r="0.9"/><circle cx="6.2" cy="13.3" r="0.9"/></g><rect x="15.8" y="12.1" width="4.3" height="6.6" rx="1" fill="#e4e4e4" stroke="#585858" stroke-width="1.5"/><rect x="12.4" y="14" width="2.2" height="4.7" rx="0.6" fill="#e4e4e4" stroke="#585858" stroke-width="1.4"/></svg><span class="abs" style="left:37px">Opening Stock...</span></div>
<div class="chip" style="left:1590px;width:24px;border-radius:4px 0 0 4px"><svg class="abs" style="left:7px;top:6px" width="15" height="13" viewBox="0 0 15 13" fill="none" stroke="#555" stroke-width="1.3"><path d="M1 12V1h8v11M9 4h5v8M0 12h15M3 3.5h1M6 3.5h1M3 6.5h1M6 6.5h1M3 9.5h1M6 9.5h1M11 7h1"/></svg></div>
<div class="act3"><i style="top:10.9px"></i><i style="top:15.9px"></i><i style="top:20.9px"></i></div>
</div>
<div class="row" style="top:540px;">
<span class="c" style="left:35px">8</span><span class="c" style="left:168px">29 May 2025</span><span class="c" style="left:326px">Air Conditioner</span>
<span class="c" style="left:800px">2</span><span class="c" style="left:958px">0</span>
<div class="badge ok">Completed</div>
<div class="chip" style="left:1274px;width:148px;border-radius:4px 0 0 4px;text-align:center;text-indent:3px">Company Asset</div>
<div class="chip" style="left:1432px;width:148px;border-radius:4px 0 0 4px"><svg class="abs" style="left:10px;top:3px" width="22" height="21" viewBox="0 0 22 21"><g fill="none" stroke="#585858" stroke-width="1.6"><path d="M4.5 1.6H10.5M1.2 2.9H15.5M2.5 3v14.6M14 3v3.8M2.2 17.4H5.8M9.1 9.1h9.7v7.7H9.1z" stroke-linejoin="round"/></g><g fill="#585858"><circle cx="6.2" cy="6.1" r="0.9"/><circle cx="10.1" cy="6.1" r="0.9"/><circle cx="6.2" cy="9.8" r="0.9"/><circle cx="6.2" cy="13.3" r="0.9"/></g><rect x="15.8" y="12.1" width="4.3" height="6.6" rx="1" fill="#e4e4e4" stroke="#585858" stroke-width="1.5"/><rect x="12.4" y="14" width="2.2" height="4.7" rx="0.6" fill="#e4e4e4" stroke="#585858" stroke-width="1.4"/></svg><span class="abs" style="left:37px">Company Stoc...</span></div>
<div class="chip" style="left:1590px;width:24px;border-radius:4px 0 0 4px"><svg class="abs" style="left:7px;top:6px" width="15" height="13" viewBox="0 0 15 13" fill="none" stroke="#555" stroke-width="1.3"><path d="M1 12V1h8v11M9 4h5v8M0 12h15M3 3.5h1M6 3.5h1M3 6.5h1M6 6.5h1M3 9.5h1M6 9.5h1M11 7h1"/></svg></div>
<div class="act3"><i style="top:10.9px"></i><i style="top:15.9px"></i><i style="top:20.9px"></i></div>
</div>
<div class="row" style="top:599px;">
<span class="c" style="left:35px">9</span><span class="c" style="left:168px">29 May 2025</span><span class="c" style="left:326px">Refridgerator</span>
<span class="c" style="left:800px">3</span><span class="c" style="left:958px">0</span>
<div class="badge ok">Completed</div>
<div class="chip" style="left:1274px;width:148px;border-radius:4px 0 0 4px;text-align:center;text-indent:3px">Company Asset</div>
<div class="chip" style="left:1432px;width:148px;border-radius:4px 0 0 4px"><svg class="abs" style="left:10px;top:3px" width="22" height="21" viewBox="0 0 22 21"><g fill="none" stroke="#585858" stroke-width="1.6"><path d="M4.5 1.6H10.5M1.2 2.9H15.5M2.5 3v14.6M14 3v3.8M2.2 17.4H5.8M9.1 9.1h9.7v7.7H9.1z" stroke-linejoin="round"/></g><g fill="#585858"><circle cx="6.2" cy="6.1" r="0.9"/><circle cx="10.1" cy="6.1" r="0.9"/><circle cx="6.2" cy="9.8" r="0.9"/><circle cx="6.2" cy="13.3" r="0.9"/></g><rect x="15.8" y="12.1" width="4.3" height="6.6" rx="1" fill="#e4e4e4" stroke="#585858" stroke-width="1.5"/><rect x="12.4" y="14" width="2.2" height="4.7" rx="0.6" fill="#e4e4e4" stroke="#585858" stroke-width="1.4"/></svg><span class="abs" style="left:37px">Opening Stock...</span></div>
<div class="chip" style="left:1590px;width:24px;border-radius:4px 0 0 4px"><svg class="abs" style="left:7px;top:6px" width="15" height="13" viewBox="0 0 15 13" fill="none" stroke="#555" stroke-width="1.3"><path d="M1 12V1h8v11M9 4h5v8M0 12h15M3 3.5h1M6 3.5h1M3 6.5h1M6 6.5h1M3 9.5h1M6 9.5h1M11 7h1"/></svg></div>
<div class="act3"><i style="top:10.9px"></i><i style="top:15.9px"></i><i style="top:20.9px"></i></div>
</div>
<div class="row" style="top:658px;background:#f1f6fd;">
<span class="c" style="left:35px">10</span><span class="c" style="left:168px">29 May 2025</span><span class="c" style="left:326px">Refridgerator</span>
<span class="c" style="left:800px">2</span><span class="c" style="left:958px">0</span>
<div class="badge ok">Completed</div>
<div class="chip" style="left:1274px;width:148px;border-radius:4px 0 0 4px;text-align:center;text-indent:3px">Company Asset</div>
<div class="chip" style="left:1432px;width:148px;border-radius:4px 0 0 4px"><svg class="abs" style="left:10px;top:3px" width="22" height="21" viewBox="0 0 22 21"><g fill="none" stroke="#585858" stroke-width="1.6"><path d="M4.5 1.6H10.5M1.2 2.9H15.5M2.5 3v14.6M14 3v3.8M2.2 17.4H5.8M9.1 9.1h9.7v7.7H9.1z" stroke-linejoin="round"/></g><g fill="#585858"><circle cx="6.2" cy="6.1" r="0.9"/><circle cx="10.1" cy="6.1" r="0.9"/><circle cx="6.2" cy="9.8" r="0.9"/><circle cx="6.2" cy="13.3" r="0.9"/></g><rect x="15.8" y="12.1" width="4.3" height="6.6" rx="1" fill="#e4e4e4" stroke="#585858" stroke-width="1.5"/><rect x="12.4" y="14" width="2.2" height="4.7" rx="0.6" fill="#e4e4e4" stroke="#585858" stroke-width="1.4"/></svg><span class="abs" style="left:37px">Company Stoc...</span></div>
<div class="chip" style="left:1590px;width:24px;border-radius:4px 0 0 4px"><svg class="abs" style="left:7px;top:6px" width="15" height="13" viewBox="0 0 15 13" fill="none" stroke="#555" stroke-width="1.3"><path d="M1 12V1h8v11M9 4h5v8M0 12h15M3 3.5h1M6 3.5h1M3 6.5h1M6 6.5h1M3 9.5h1M6 9.5h1M11 7h1"/></svg></div>
<div class="act3"><i style="top:10.9px"></i><i style="top:15.9px"></i><i style="top:20.9px"></i></div>
</div>
<div class="abs" style="left:0;top:724px;width:1676px;height:1px;background:#e6e8ec"></div>
<div class="abs" style="left:0;top:725px;width:1676px;height:18px;background:#f8f8f8"></div>
<div class="abs" style="left:4px;top:728px;width:1553px;height:10px;border-radius:5px;background:#c3c4c4"></div>
</div>
<div class="abs" style="left:523px;top:200px;width:110px;height:3px;background:#0b63d4"></div>
<div class="abs" style="left:1887px;top:470px;width:40px;height:142px;border:1px solid #e2e2e2;border-radius:8px;background:rgba(255,255,255,.6)">
<svg class="abs" style="left:8px;top:10px" width="14" height="125" viewBox="0 0 14 125" fill="none" stroke="#aaa" stroke-width="1"><path d="M1 3h12M1 6h12" stroke-dasharray="2 1"/><path d="M2 33.5l5-5 5 5M2 37.5l5-5 5 5M2 64l5-5 5 5M2 87l5 5 5-5M2 112l5 5 5-5M2 116l5 5 5-5"/></svg></div>
</body></html>
